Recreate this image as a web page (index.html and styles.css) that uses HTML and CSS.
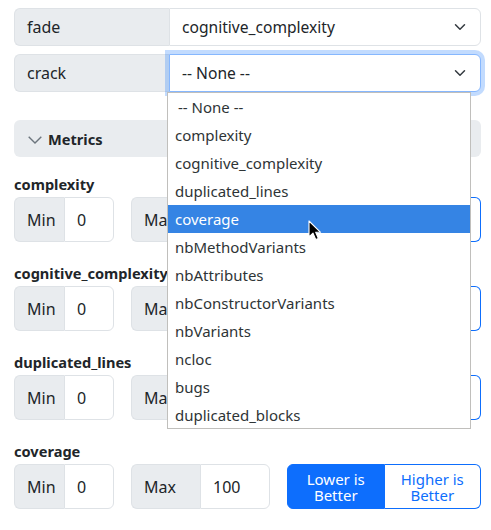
FILE: index.html
```
<!DOCTYPE html>
<html>
<head>
<meta charset="utf-8">
<link rel="stylesheet" href="styles.css">
</head>
<body>
<div class="page">
  <div class="ig sel-row">
    <span class="lbl">fade</span>
    <div class="sel">cognitive_complexity
      <svg class="chev" viewBox="0 0 16 16" width="16" height="12"><path d="M2 5l6 6 6-6" fill="none" stroke="#343a40" stroke-width="2" stroke-linecap="round" stroke-linejoin="round"/></svg>
    </div>
  </div>
  <div class="ig sel-row">
    <span class="lbl">crack</span>
    <div class="sel focus">-- None --
      <svg class="chev" viewBox="0 0 16 16" width="16" height="12"><path d="M2 5l6 6 6-6" fill="none" stroke="#343a40" stroke-width="2" stroke-linecap="round" stroke-linejoin="round"/></svg>
    </div>
  </div>

  <div class="acc-head">
    <svg class="acc-chev" viewBox="0 0 14 8" width="14" height="8"><path d="M0.7 0.7l6.3 6.3 6.3-6.3" fill="none" stroke="#6c757d" stroke-width="1.4"/></svg>
    <span>Metrics</span>
  </div>

  <div class="metrics">
    <div class="metric">
      <div class="m-name">complexity</div>
      <div class="m-row">
        <div class="ig"><span class="ig-text w-min">Min</span><span class="ig-in w-min-in">0</span></div>
        <div class="ig"><span class="ig-text w-max">Max</span><span class="ig-in w-max-in">100</span></div>
        <div class="btn-group"><span class="btn active">Lower is<br>Better</span><span class="btn">Higher is<br>Better</span></div>
      </div>
    </div>
    <div class="metric">
      <div class="m-name">cognitive_complexity</div>
      <div class="m-row">
        <div class="ig"><span class="ig-text w-min">Min</span><span class="ig-in w-min-in">0</span></div>
        <div class="ig"><span class="ig-text w-max">Max</span><span class="ig-in w-max-in">100</span></div>
        <div class="btn-group"><span class="btn active">Lower is<br>Better</span><span class="btn">Higher is<br>Better</span></div>
      </div>
    </div>
    <div class="metric">
      <div class="m-name">duplicated_lines</div>
      <div class="m-row">
        <div class="ig"><span class="ig-text w-min">Min</span><span class="ig-in w-min-in">0</span></div>
        <div class="ig"><span class="ig-text w-max">Max</span><span class="ig-in w-max-in">100</span></div>
        <div class="btn-group"><span class="btn active">Lower is<br>Better</span><span class="btn">Higher is<br>Better</span></div>
      </div>
    </div>
    <div class="metric">
      <div class="m-name">coverage</div>
      <div class="m-row">
        <div class="ig"><span class="ig-text w-min">Min</span><span class="ig-in w-min-in">0</span></div>
        <div class="ig"><span class="ig-text w-max">Max</span><span class="ig-in w-max-in">100</span></div>
        <div class="btn-group"><span class="btn active">Lower is<br>Better</span><span class="btn">Higher is<br>Better</span></div>
      </div>
    </div>
  </div>

  <ul class="dropdown">
    <li class="first">-- None --</li>
    <li>complexity</li>
    <li>cognitive_complexity</li>
    <li>duplicated_lines</li>
    <li class="hl">coverage</li>
    <li>nbMethodVariants</li>
    <li>nbAttributes</li>
    <li>nbConstructorVariants</li>
    <li>nbVariants</li>
    <li>ncloc</li>
    <li>bugs</li>
    <li>duplicated_blocks</li>
  </ul>

  <svg class="cursor" viewBox="0 0 14 22" width="14" height="22"><path d="M1 1 L1 17 L5 13.2 L7.8 19.6 L10.4 18.5 L7.7 12.3 L12.6 12.3 Z" fill="#000" stroke="#fff" stroke-width="1.1" stroke-linejoin="round"/></svg>
</div>
</body>
</html>
```

FILE: styles.css
```
* { box-sizing: border-box; }
html, body { margin: 0; padding: 0; background: #fff; }
body {
  font-family: "Noto Sans", "Open Sans", sans-serif;
  font-size: 16px;
  line-height: 24px;
  color: #212529;
}
.page {
  position: relative;
  width: 491px;
  height: 530px;
  padding: 8px 10px 0 14px;
  overflow: hidden;
}
.ig { display: flex; }
.sel-row { height: 38px; margin-bottom: 8px; }
.lbl {
  width: 155px;
  background: #e9ecef;
  border: 1px solid #dee2e6;
  border-right: 0;
  border-radius: 6px 0 0 6px;
  padding: 0 12px;
  display: flex;
  align-items: center;
}
.sel {
  flex: 1;
  position: relative;
  border: 1px solid #dee2e6;
  border-radius: 0 6px 6px 0;
  padding: 0 12px;
  display: flex;
  align-items: center;
  background: #fff;
  font-size: 15.6px;
}
.sel.focus {
  border-color: #86b7fe;
  box-shadow: 0 0 0 4px rgba(13, 110, 253, 0.25);
}
.chev { position: absolute; right: 12px; top: 12px; }

.acc-head {
  margin-top: 28px;
  height: 37px;
  background: #e9ecef;
  border-radius: 6px;
  display: flex;
  align-items: center;
  padding: 0 14px;
  gap: 6px;
  font-weight: 700;
  font-size: 14.6px;
  color: #212529;
}
.acc-chev { margin-top: 2px; }

.metrics { padding-top: 15px; }
.metric { margin-bottom: 19px; }
.m-name { font-weight: 700; font-size: 14.6px; line-height: 24px; margin-bottom: 1px; }
.m-row {
  display: grid;
  grid-template-columns: 100px 139px 1fr;
  column-gap: 17px;
  height: 45px;
}
.ig-text {
  background: #e9ecef;
  border: 1px solid #dee2e6;
  border-right: 0;
  border-radius: 6px 0 0 6px;
  padding: 0 12px;
  display: flex;
  align-items: center;
}
.ig-in {
  border: 1px solid #dee2e6;
  border-radius: 0 6px 6px 0;
  padding: 0 12px;
  display: flex;
  align-items: center;
  background: #fff;
}
.w-min { width: 50px; }
.w-min-in { width: 50px; }
.w-max { width: 69px; }
.w-max-in { width: 70px; }

.btn-group { display: flex; }
.btn {
  flex: 1;
  border: 1px solid #0d6efd;
  color: #0d6efd;
  background: #fff;
  font-size: 15px;
  line-height: 16px;
  text-align: center;
  display: flex;
  align-items: center;
  justify-content: center;
}
.btn:first-child { border-radius: 6px 0 0 6px; }
.btn:last-child { border-radius: 0 6px 6px 0; border-left: 0; }
.btn.active { background: #0d6efd; color: #fff; }

.dropdown {
  position: absolute;
  left: 167px;
  top: 92px;
  width: 304px;
  height: 337px;
  margin: 0;
  padding: 0;
  list-style: none;
  background: #fff;
  border: 1px solid #c0bfbc;
  font-size: 15px;
  color: #2e3436;
}
.dropdown li {
  height: 28px;
  line-height: 28px;
  padding-left: 7px;
}
.dropdown li.first { padding-left: 10px; }
.dropdown li.hl { background: #3584e4; color: #fff; }

.cursor { position: absolute; left: 308px; top: 220px; }
```
